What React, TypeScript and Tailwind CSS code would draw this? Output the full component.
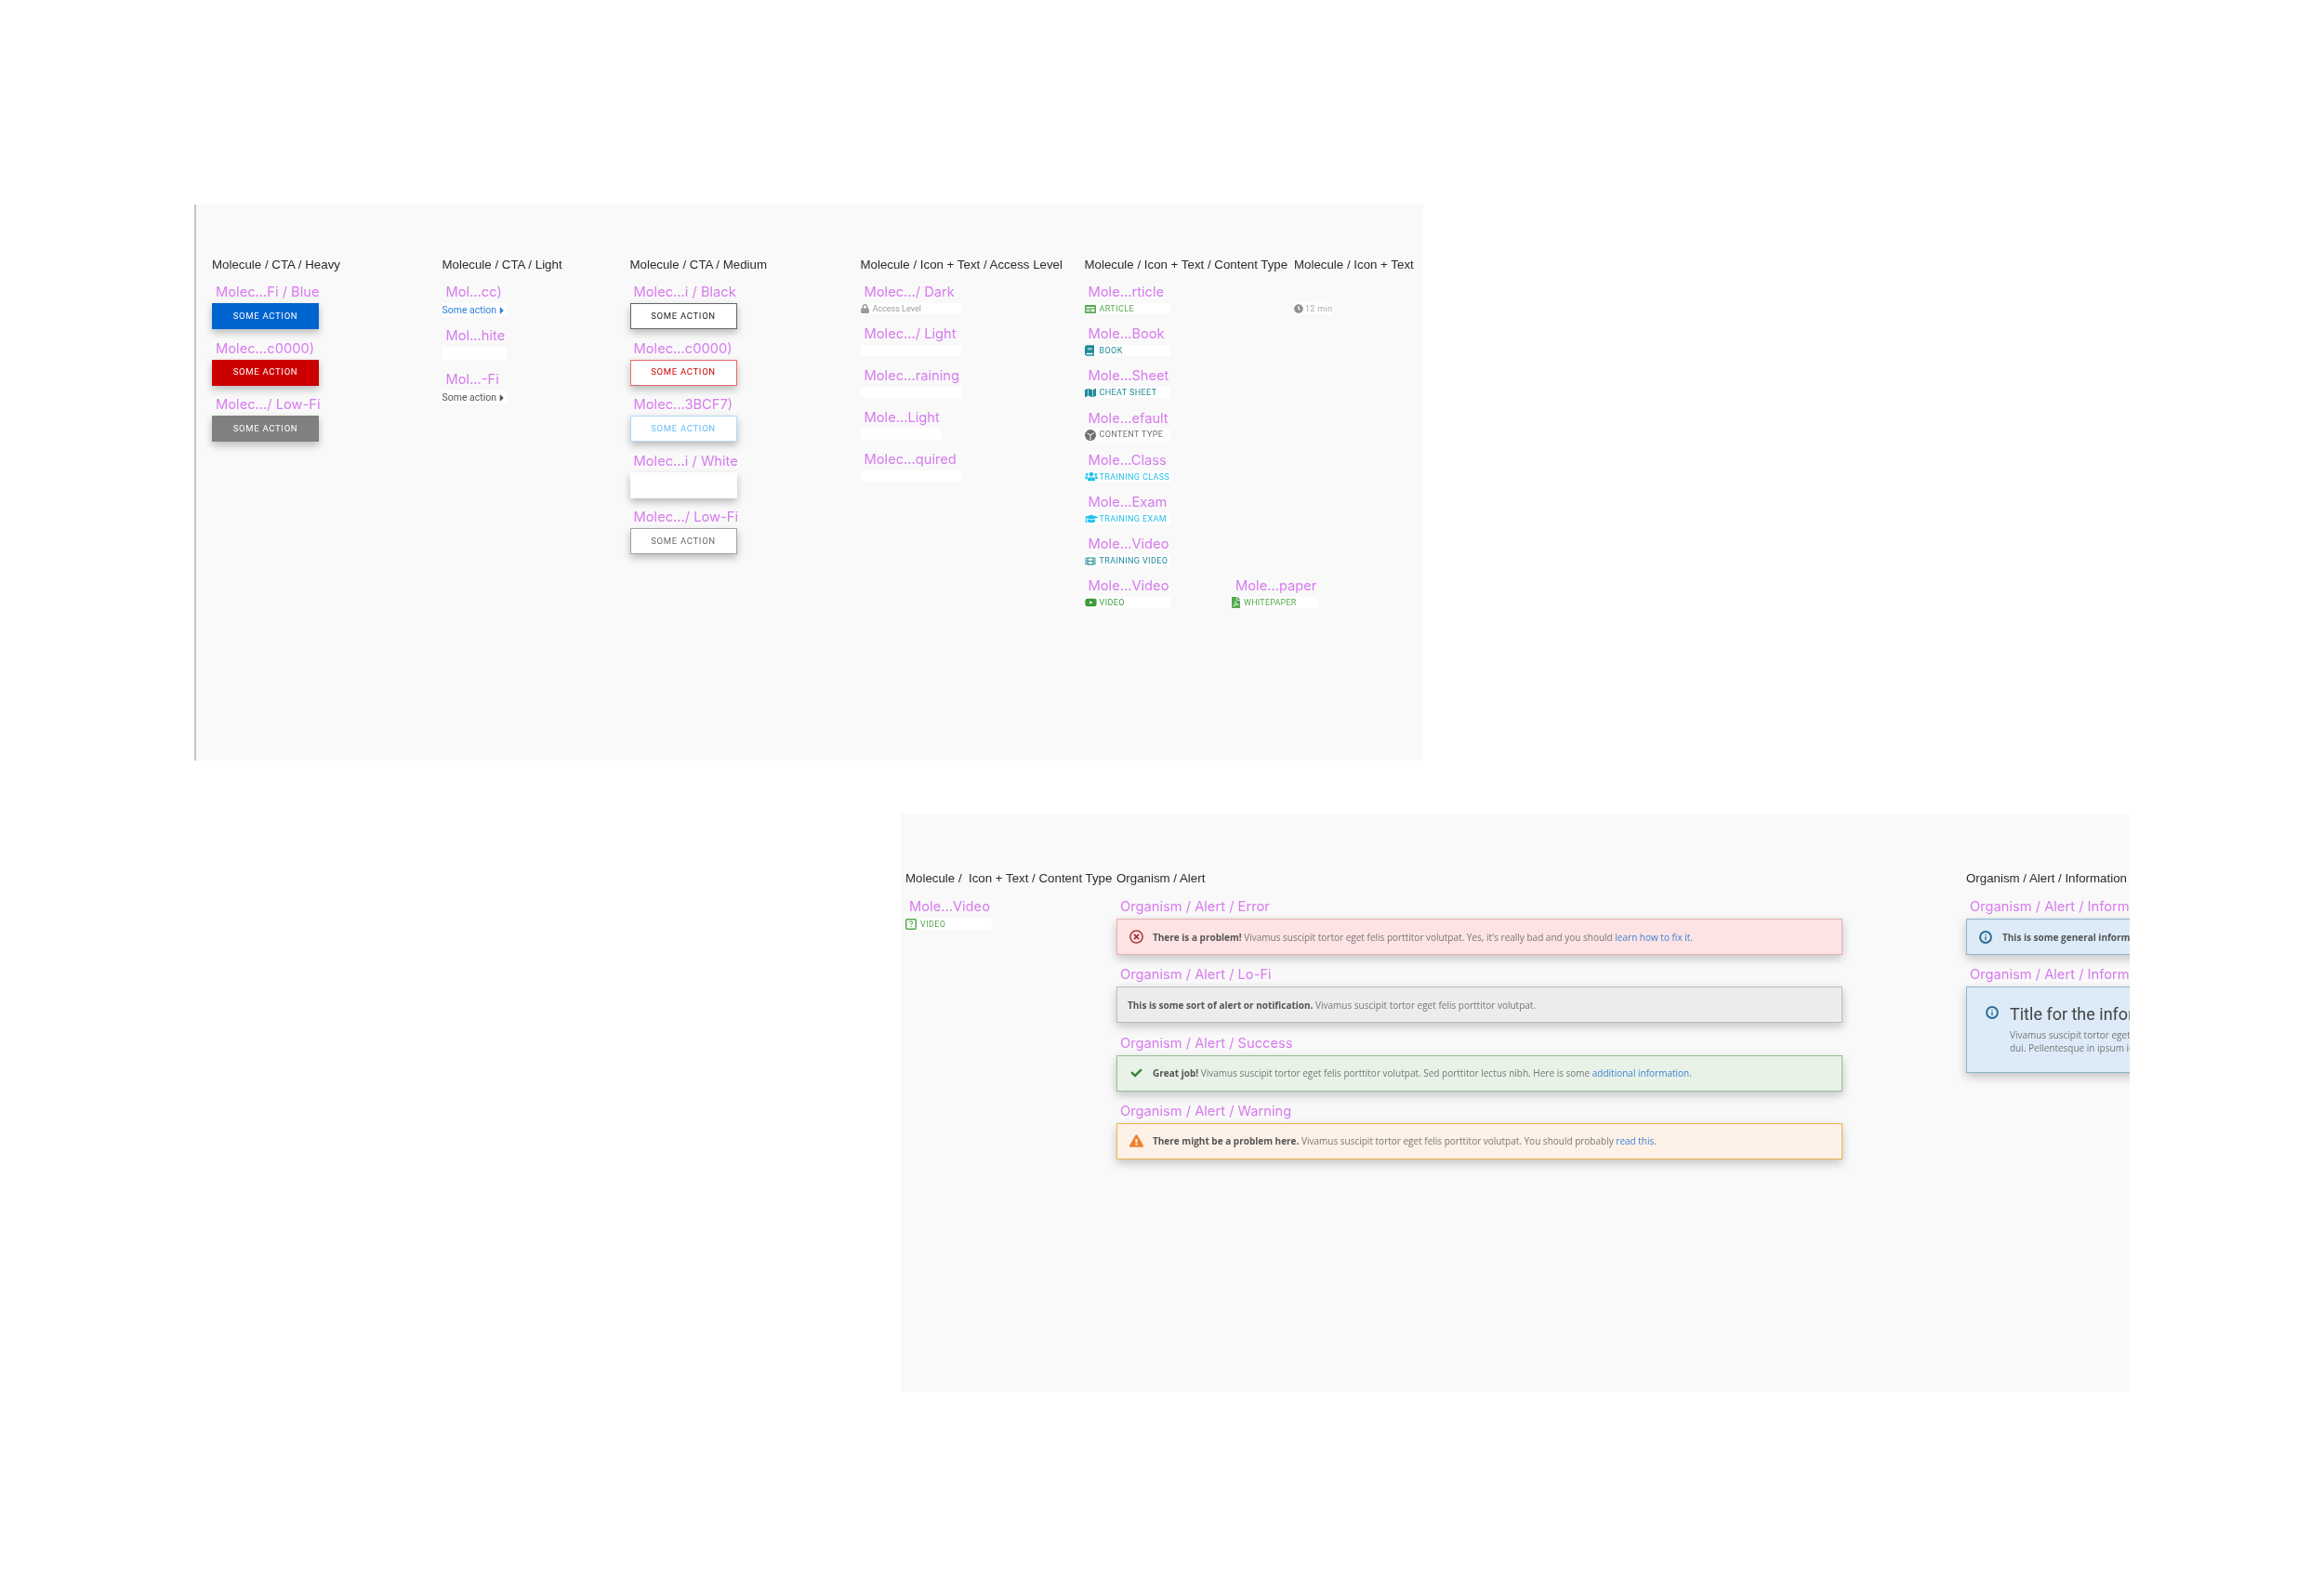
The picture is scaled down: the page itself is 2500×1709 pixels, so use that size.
import React, { type ReactNode } from "react";
import {
  FaBook,
  FaCaretRight,
  FaCheck,
  FaClock,
  FaExclamationTriangle,
  FaFilePdf,
  FaFilm,
  FaGraduationCap,
  FaLock,
  FaMap,
  FaRegTimesCircle,
  FaUsers,
  FaYoutube,
} from "react-icons/fa";

function Heading({ children }: { children: ReactNode }) {
  return (
    <div className="h-5 whitespace-nowrap font-['Liberation_Sans',sans-serif] text-[13.3px] leading-5 text-[#2b2b2b]">
      {children}
    </div>
  );
}

function Label({ children }: { children: ReactNode }) {
  return (
    <div className="h-5 whitespace-nowrap pl-1 font-['Inter',sans-serif] text-[14.7px] leading-[22px] text-[#d77bee]">
      {children}
    </div>
  );
}

function CtaButton({ label, text, className }: { label: string; text?: string; className: string }) {
  return (
    <div>
      <div className="mb-[3px]">
        <Label>{label}</Label>
      </div>
      <div
        className={`flex h-7 w-[115px] items-center justify-center font-['Roboto',sans-serif] text-[9.5px] tracking-[0.7px] shadow-[0_4px_8px_rgba(0,0,0,0.25)] ${className}`}
      >
        {text}
      </div>
    </div>
  );
}

function LightCta({ label, className }: { label: string; className: string }) {
  return (
    <div>
      <div className="mb-[3px]">
        <Label>{label}</Label>
      </div>
      <div
        className={`flex h-3.5 w-[69px] items-center gap-[2px] bg-white pt-px font-['Roboto',sans-serif] text-[10.5px] ${className}`}
      >
        Some action
        <FaCaretRight className="h-3 w-2" />
      </div>
    </div>
  );
}

function IconRow({
  label,
  icon,
  text,
  className = "",
  width = "w-[92px]",
  iconWidth = "w-4",
}: {
  label: string;
  icon?: ReactNode;
  text?: string;
  className?: string;
  width?: string;
  iconWidth?: string;
}) {
  return (
    <div>
      <div className="mb-[3px]">
        <Label>{label}</Label>
      </div>
      <div
        className={`flex h-3 items-center whitespace-nowrap bg-white font-['Roboto',sans-serif] text-[9px] ${width} ${className}`}
      >
        <span className={`flex shrink-0 items-center ${iconWidth}`}>{icon}</span>
        <span className="pt-px">{text}</span>
      </div>
    </div>
  );
}

function ArticleIcon() {
  return (
    <svg viewBox="0 0 12 9" className="h-[9px] w-3" fill="currentColor">
      <path d="M1 0h10a1 1 0 0 1 1 1v7a1 1 0 0 1-1 1H1a1 1 0 0 1-1-1V1a1 1 0 0 1 1-1z" />
      <path d="M1.5 2h9v1.2h-9zM1.5 4.5h4v1h-4zM1.5 6.3h4v1h-4zM6.7 4.5h3.8v2.8H6.7z" fill="#ffffff" />
    </svg>
  );
}

function ContentTypeIcon() {
  return (
    <svg viewBox="0 0 12 12" className="h-3 w-3">
      <circle cx="6" cy="6" r="6" fill="currentColor" />
      <path d="M2.5 4 6 5.8 10 3.6M6 5.8V11" stroke="#ffffff" strokeWidth="1" fill="none" />
    </svg>
  );
}

function HelpBoxIcon() {
  return (
    <svg viewBox="0 0 12 12" className="h-3 w-3" fill="none" stroke="currentColor">
      <rect x="0.75" y="0.75" width="10.5" height="10.5" rx="1" strokeWidth="1.5" />
      <path d="M4.4 4.6C4.4 3.6 5.1 3 6 3s1.6.6 1.6 1.5C7.6 5.6 6 5.6 6 7" strokeWidth="1.1" />
      <path d="M6 8v1.2" strokeWidth="1.1" />
    </svg>
  );
}

function InfoIcon() {
  return (
    <svg viewBox="0 0 14 14" className="h-[14px] w-[14px] shrink-0 text-[#2f6c97]" fill="none" stroke="currentColor">
      <circle cx="7" cy="7" r="5.9" strokeWidth="2" />
      <path d="M7 6.2v4M7 3.8v1.2" strokeWidth="1.4" />
    </svg>
  );
}

function Alert({
  label,
  className,
  icon,
  children,
}: {
  label: string;
  className: string;
  icon?: ReactNode;
  children: ReactNode;
}) {
  return (
    <div>
      <div className="mb-1">
        <Label>{label}</Label>
      </div>
      <div
        className={`flex h-[39px] w-[781px] items-center border-[1.5px] font-['Open_Sans',sans-serif] text-[10px] text-[#777777] shadow-[0_4px_10px_rgba(0,0,0,0.22)] ${className}`}
      >
        {icon}
        <p className="whitespace-nowrap pt-px">{children}</p>
      </div>
    </div>
  );
}

function AlertIcon({ children }: { children: ReactNode }) {
  return <span className="ml-[12px] mr-[10px] flex w-[16px] justify-center">{children}</span>;
}

export default function App() {
  return (
    <div className="h-[1709px] w-[2500px] overflow-hidden bg-white pt-[220px]">
      <section className="ml-[209px] flex h-[598px] w-[1322px] border-l-2 border-[#c4c4c4] bg-[#f9f9f9] pl-[17px] pt-[55px] blur-[0.4px]">
        <div className="w-[247.5px] shrink-0">
          <Heading>Molecule / CTA / Heavy</Heading>
          <div className="mt-2 flex flex-col gap-[9.5px]">
            <CtaButton label="Molec...Fi / Blue" text="SOME ACTION" className="bg-[#0064cf] text-white" />
            <CtaButton label="Molec...c0000)" text="SOME ACTION" className="bg-[#cc0000] text-white" />
            <CtaButton label="Molec.../ Low-Fi" text="SOME ACTION" className="bg-[#808080] text-white" />
          </div>
        </div>

        <div className="w-[202px] shrink-0">
          <Heading>Molecule / CTA / Light</Heading>
          <div className="mt-2 flex flex-col gap-[10px]">
            <LightCta label="Mol...cc)" className="text-[#2f80d8]" />
            <LightCta label="Mol...hite" className="text-white" />
            <LightCta label="Mol...-Fi" className="text-[#555555]" />
          </div>
        </div>

        <div className="w-[248px] shrink-0">
          <Heading>Molecule / CTA / Medium</Heading>
          <div className="mt-2 flex flex-col gap-[9.5px]">
            <CtaButton label="Molec...i / Black" text="SOME ACTION" className="border-[1.5px] border-[#666666] bg-white text-[#222222]" />
            <CtaButton label="Molec...c0000)" text="SOME ACTION" className="border-[1.5px] border-[#e9696c] bg-white text-[#cc0000]" />
            <CtaButton label="Molec...3BCF7)" text="SOME ACTION" className="border-[1.5px] border-[#b5d9f5] bg-white text-[#63bcf7]" />
            <CtaButton label="Molec...i / White" className="bg-white" />
            <CtaButton label="Molec.../ Low-Fi" text="SOME ACTION" className="border-[1.5px] border-[#a3a3a3] bg-white text-[#666666]" />
          </div>
        </div>

        <div className="w-[241px] shrink-0">
          <Heading>Molecule / Icon + Text / Access Level</Heading>
          <div className="mt-2 flex flex-col gap-[10px]">
            <IconRow
              label="Molec.../ Dark"
              width="w-[108px]"
              iconWidth="w-[13px]"
              className="text-[#9a9a9a]"
              icon={<FaLock className="h-[10px] w-[9px]" />}
              text="Access Level"
            />
            <IconRow label="Molec.../ Light" width="w-[108px]" />
            <IconRow label="Molec...raining" width="w-[108px]" />
            <IconRow label="Mole...Light" width="w-[87px]" />
            <IconRow label="Molec...quired" width="w-[108px]" />
          </div>
        </div>

        <div className="w-[225.5px] shrink-0">
          <Heading>Molecule / Icon + Text / Content Type</Heading>
          <div className="mt-2 grid grid-cols-[158.5px_93px] auto-rows-[45.2px]">
            <IconRow label="Mole...rticle" className="tracking-[0.4px] text-[#55a94f]" icon={<ArticleIcon />} text="ARTICLE" />
            <div className="col-start-1">
              <IconRow label="Mole...Book" className="tracking-[0.4px] text-[#1e8a99]" icon={<FaBook className="h-3 w-[10px]" />} text="BOOK" />
            </div>
            <div className="col-start-1">
              <IconRow label="Mole...Sheet" className="tracking-[0.4px] text-[#1e8a99]" icon={<FaMap className="h-[11px] w-3" />} text="CHEAT SHEET" />
            </div>
            <div className="col-start-1">
              <IconRow label="Mole...efault" className="tracking-[0.4px] text-[#6f6f6f]" icon={<ContentTypeIcon />} text="CONTENT TYPE" />
            </div>
            <div className="col-start-1">
              <IconRow label="Mole...Class" className="tracking-[0.4px] text-[#22c0ea]" icon={<FaUsers className="h-[11px] w-[14px]" />} text="TRAINING CLASS" />
            </div>
            <div className="col-start-1">
              <IconRow label="Mole...Exam" className="tracking-[0.4px] text-[#22c0ea]" icon={<FaGraduationCap className="h-3 w-[14px]" />} text="TRAINING EXAM" />
            </div>
            <div className="col-start-1">
              <IconRow label="Mole...Video" className="tracking-[0.4px] text-[#1e8a99]" icon={<FaFilm className="h-[11px] w-3" />} text="TRAINING VIDEO" />
            </div>
            <div className="col-start-1">
              <IconRow label="Mole...Video" className="tracking-[0.4px] text-[#3f9c3a]" icon={<FaYoutube className="h-3 w-[13px]" />} text="VIDEO" />
            </div>
            <div className="col-start-2 row-start-8">
              <IconRow
                label="Mole...paper"
                className="tracking-[0.2px] text-[#55a94f]"
                width="w-[93px]"
                iconWidth="w-[13px]"
                icon={<FaFilePdf className="h-3 w-[9px]" />}
                text="WHITEPAPER"
              />
            </div>
          </div>
        </div>

        <div className="w-[132px] shrink-0">
          <Heading>Molecule / Icon + Text</Heading>
          <div className="mt-[31px] flex h-3 w-[40px] items-center gap-[2px] whitespace-nowrap bg-white font-['Roboto',sans-serif] text-[9px] tracking-[0.3px] text-[#a8a8a8]">
            <FaClock className="h-[10px] w-[10px] shrink-0 text-[#8f8f8f]" />
            <span className="pt-px">12 min</span>
          </div>
        </div>
      </section>

      <section className="ml-[969px] mt-[57px] flex h-[622px] w-[1322px] overflow-hidden bg-[#f9f9f9] pl-[5px] pt-[60px] blur-[0.4px]">
        <div className="w-[227px] shrink-0">
          <Heading>Molecule / &nbsp;Icon + Text / Content Type</Heading>
          <div className="mt-[9px]">
            <div className="mb-1">
              <Label>Mole...Video</Label>
            </div>
            <div className="flex h-3 w-[93px] items-center bg-white font-['Roboto',sans-serif] text-[9px] tracking-[0.4px] text-[#55a94f]">
              <span className="flex w-4 shrink-0 items-center">
                <HelpBoxIcon />
              </span>
              <span className="pt-px">VIDEO</span>
            </div>
          </div>
        </div>

        <div className="w-[914px] shrink-0">
          <Heading>Organism / Alert</Heading>
          <div className="mt-[9px] flex flex-col gap-[10.3px]">
            <Alert
              label="Organism / Alert / Error"
              className="border-[#e6b0b4] bg-[#fde3e3]"
              icon={
                <AlertIcon>
                  <FaRegTimesCircle className="h-[15px] w-[15px] text-[#a52a34]" />
                </AlertIcon>
              }
            >
              <b className="text-[#555555]">There is a problem!</b> Vivamus suscipit tortor eget felis porttitor volutpat. Yes, it's really bad and you should{" "}
              <span className="text-[#3f82d6]">learn how to fix it</span>.
            </Alert>
            <Alert label="Organism / Alert / Lo-Fi" className="border-[#bdbdbd] bg-[#ececec] pl-[11px]">
              <b className="text-[#555555]">This is some sort of alert or notification.</b> Vivamus suscipit tortor eget felis porttitor volutpat.
            </Alert>
            <Alert
              label="Organism / Alert / Success"
              className="border-[#94bd90] bg-[#e8f2e7]"
              icon={
                <AlertIcon>
                  <FaCheck className="h-[12px] w-[13px] text-[#37803a]" />
                </AlertIcon>
              }
            >
              <b className="text-[#555555]">Great job!</b> Vivamus suscipit tortor eget felis porttitor volutpat. Sed porttitor lectus nibh. Here is some{" "}
              <span className="text-[#3f82d6]">additional information</span>.
            </Alert>
            <Alert
              label="Organism / Alert / Warning"
              className="border-[#e8b64a] bg-[#fef1e7]"
              icon={
                <AlertIcon>
                  <FaExclamationTriangle className="h-[14px] w-[15px] text-[#ef8030]" />
                </AlertIcon>
              }
            >
              <b className="text-[#555555]">There might be a problem here.</b> Vivamus suscipit tortor eget felis porttitor volutpat. You should probably{" "}
              <span className="text-[#3f82d6]">read this</span>.
            </Alert>
          </div>
        </div>

        <div className="w-[400px] shrink-0">
          <Heading>Organism / Alert / Information</Heading>
          <div className="mt-[9px] flex flex-col gap-[10.3px]">
            <Alert
              label="Organism / Alert / Information"
              className="border-[#8eb3cf] bg-[#dcebf7]"
              icon={
                <AlertIcon>
                  <InfoIcon />
                </AlertIcon>
              }
            >
              <b className="text-[#555555]">This is some general information.</b>
            </Alert>
            <div>
              <div className="mb-1">
                <Label>Organism / Alert / Information</Label>
              </div>
              <div className="flex h-[93px] w-[400px] items-start gap-[12px] border-[1.5px] border-[#8eb3cf] bg-[#dcebf7] pl-[20px] pt-[18px] shadow-[0_4px_10px_rgba(0,0,0,0.22)]">
                <span className="mt-[2px]">
                  <InfoIcon />
                </span>
                <div>
                  <div className="whitespace-nowrap font-['Roboto',sans-serif] text-[18px] leading-[22px] text-[#444444]">
                    Title for the information
                  </div>
                  <p className="mt-1 whitespace-nowrap font-['Open_Sans',sans-serif] text-[10px] leading-[14px] text-[#777777]">
                    Vivamus suscipit tortor eget felis porttitor volutpat.
                    <br />
                    dui. Pellentesque in ipsum id orci porta dapibus.
                  </p>
                </div>
              </div>
            </div>
          </div>
        </div>
      </section>
    </div>
  );
}
